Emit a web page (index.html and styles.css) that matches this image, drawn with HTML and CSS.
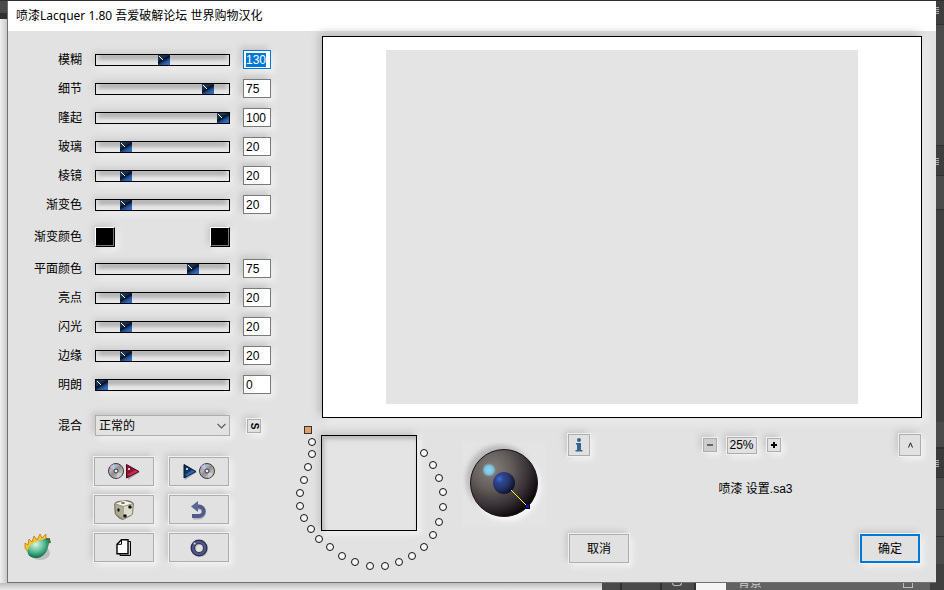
FILE: index.html
```
<!DOCTYPE html>
<html lang="zh-CN">
<head>
    <meta charset="UTF-8">
    <meta name="viewport" content="width=device-width, initial-scale=1.0">
    <title>喷漆Lacquer 1.80</title>
    <link rel="stylesheet" href="styles.css">
</head>
<body>

    <div class="desk-top"></div>
    <div class="desk-left"></div>

    <main class="dialog">
        <h1 class="title-bar">喷漆Lacquer 1.80 吾爱破解论坛 世界购物汉化</h1>

        <div class="dialog-body">
            <!-- Left side - sliders and buttons -->
            <section class="controls">
                <div class="rows" id="rowsTop"></div>

                <div class="row swatch-row">
                    <label for="colorA">渐变颜色</label>
                    <div class="swatches">
                        <input type="color" id="colorA" value="#000000">
                        <input type="color" id="colorB" value="#000000" aria-label="渐变颜色 2">
                    </div>
                </div>

                <div class="rows" id="rowsBottom"></div>

                <div class="row blend-row">
                    <label for="blend">混合</label>
                    <div class="select-box">
                        <select id="blend">
                            <option>正常的</option>
                        </select>
                        <svg class="chevron" width="9" height="6" viewBox="0 0 9 6"><path d="M0.5 0.8 4.5 4.8 8.5 0.8" fill="none" stroke="#555" stroke-width="1.2"/></svg>
                    </div>
                    <button class="tiny-button swap"><span>S</span></button>
                </div>

                <div class="actions">
                    <svg class="logo" width="30" height="30" viewBox="0 0 30 30">
                        <defs>
                            <radialGradient id="pear" cx="0.38" cy="0.3" r="0.75">
                                <stop offset="0" stop-color="#d9f7e6"/>
                                <stop offset="0.45" stop-color="#6cc4a0"/>
                                <stop offset="0.8" stop-color="#1d8a63"/>
                                <stop offset="1" stop-color="#07402c"/>
                            </radialGradient>
                        </defs>
                        <ellipse cx="16" cy="21" rx="10" ry="7" fill="#a5a5a5" opacity="0.6"/>
                        <path d="M4 20 1 16l0-5 3 2 1-6 3 3 2-6 3 4 3-6 2 4 4-4 0 8-10 9z" fill="#f7c32e" stroke="#b97812" stroke-width="0.8"/>
                        <path d="M4 17C6 12 12 9 17 8c4-1 6-2 7-1 2 2 1 5 0 8-1 6-6 11-12 11C6 26 2 22 4 17z" fill="url(#pear)"/>
                        <path d="M22 7l3 0 1 4" fill="none" stroke="#48732c" stroke-width="2"/>
                    </svg>

                    <button class="action" aria-label="打开设置">
                        <svg width="32" height="18" viewBox="0 0 32 18">
                            <defs>
                                <linearGradient id="disc" x1="0" y1="0" x2="1" y2="1">
                                    <stop offset="0" stop-color="#77717c"/>
                                    <stop offset="0.3" stop-color="#b9b5c2"/>
                                    <stop offset="0.5" stop-color="#8f8f8f"/>
                                    <stop offset="0.75" stop-color="#c5bcc9"/>
                                    <stop offset="1" stop-color="#777"/>
                                </linearGradient>
                                <g id="cd">
                                    <circle cx="8" cy="8" r="7.5" fill="url(#disc)" stroke="#3c3a35"/>
                                    <path d="M7 7 2 4a7 7 0 0 1 2-2z" fill="#e9a6e8"/>
                                    <path d="M7 7 4 2l2-1z" fill="#8de0ef"/>
                                    <path d="M9 9l5 2-2 3z" fill="#a7e8b0"/>
                                    <path d="M9 9l3 5-3 1z" fill="#ecb3ea"/>
                                    <circle cx="8" cy="8" r="2" fill="#eee" stroke="#333"/>
                                </g>
                            </defs>
                            <use href="#cd"/>
                            <path d="M20 3l12 6-12 8z" fill="#aaa"/>
                            <path d="M18.500 1.500l12.500 7-12.500 6.500z" fill="#8c1230" stroke="#4d0a1c"/>
                            <path d="M19 12l8-5 3 1.500-8 4z" fill="#c9304f"/>
                            <circle cx="21" cy="6" r="1" fill="#fff"/>
                        </svg>
                    </button>
                    <button class="action" aria-label="保存设置">
                        <svg width="33" height="18" viewBox="0 0 33 18">
                            <path d="M2 3l12 6-12 8z" fill="#aaa"/>
                            <path d="M1 1.500l12 7-12 6.500z" fill="#12315f" stroke="#0b1b38"/>
                            <path d="M2 12l7-5 3 1.500-8 4.500z" fill="#2a66b5"/>
                            <circle cx="4" cy="6" r="1" fill="#fff"/>
                            <use href="#cd" x="16"/>
                        </svg>
                    </button>
                    <button class="action" aria-label="随机">
                        <svg width="20" height="20" viewBox="0 0 20 20">
                            <path d="M0.500 4Q1 2 4 1.500L13 .5Q18 1 19.500 3.500L18.500 14Q18 15 16 16L9 19.500Q7 19 5 18L2 15Q1 14 1 12z" fill="#8f8d76" stroke="#55543f" stroke-width="0.6"/>
                            <path d="M1.500 3.500 10 .8l8.500 2.500L9.500 6z" fill="#f5f4e9"/>
                            <path d="M1.200 4.300 9.300 6.700l-.3 12L2.500 14z" fill="#aeac97"/>
                            <path d="M9.800 6.700l8.900-2.400-.7 10L9.500 18.700z" fill="#dcdaca"/>
                            <ellipse cx="9" cy="3" rx="2" ry="0.700" fill="#333"/>
                            <ellipse cx="4.500" cy="10" rx="1.200" ry="1.700" fill="#111"/>
                            <circle cx="16" cy="7" r="1.800" fill="#111"/>
                            <circle cx="11" cy="16" r="1.800" fill="#111"/>
                        </svg>
                    </button>
                    <button class="action" aria-label="撤销">
                        <svg width="18" height="20" viewBox="0 0 18 20">
                            <path d="M6 8h3a4.700 4.700 0 0 1 0 9.500H3" fill="none" stroke="#b5b5b5" stroke-width="4"/>
                            <path d="M6 6.500h3a4.700 4.700 0 0 1 0 9.500H2" fill="none" stroke="#525b8a" stroke-width="4"/>
                            <path d="M1 6.500 8 1v11z" fill="#5b6595"/>
                        </svg>
                    </button>
                    <button class="action" aria-label="复制">
                        <svg width="16" height="18" viewBox="0 0 16 18">
                            <path d="M4 2.500h10.500v14H4z" fill="#d5d2c4" stroke="#000"/>
                            <path d="M5.500.8H12v14H1V5.300z" fill="#fff" stroke="#000" stroke-width="1.400"/>
                            <path d="M5.500 1v4.300H1" fill="none" stroke="#000"/>
                        </svg>
                    </button>
                    <button class="action" aria-label="重置">
                        <svg width="18" height="18" viewBox="0 0 18 18">
                            <circle cx="10" cy="10" r="6" fill="none" stroke="#b5b5b5" stroke-width="4"/>
                            <circle cx="9" cy="9" r="6.200" fill="none" stroke="#272d4e" stroke-width="4.600"/>
                            <circle cx="9" cy="9" r="6" fill="none" stroke="#4f5883" stroke-width="2.500"/>
                            <circle cx="4.500" cy="4.500" r="1" fill="#dde"/>
                        </svg>
                    </button>
                </div>
            </section>

            <!-- Right side - preview and bottom panel -->
            <section class="stage">
                <div class="preview">
                    <div class="preview-image"></div>
                </div>

                <div class="panel">
                    <div class="memory" id="memory">
                        <div class="memory-box"></div>
                        <button class="memory-reset" aria-label="清除"></button>
                    </div>

                    <svg class="light" width="85" height="85" viewBox="0 0 85 85">
                        <defs>
                            <radialGradient id="ball" cx="0.32" cy="0.3" r="0.74">
                                <stop offset="0" stop-color="#858080"/>
                                <stop offset="0.4" stop-color="#635c5a"/>
                                <stop offset="0.75" stop-color="#352e33"/>
                                <stop offset="1" stop-color="#0d090b"/>
                            </radialGradient>
                            <radialGradient id="core" cx="0.3" cy="0.32" r="0.72">
                                <stop offset="0" stop-color="#3c6ce0"/>
                                <stop offset="0.25" stop-color="#2f468f"/>
                                <stop offset="0.6" stop-color="#26366c"/>
                                <stop offset="1" stop-color="#0d1330"/>
                            </radialGradient>
                            <radialGradient id="glow">
                                <stop offset="0" stop-color="#87d9f5"/>
                                <stop offset="0.6" stop-color="#7dc7e0"/>
                                <stop offset="1" stop-color="#7dc7e0" stop-opacity="0"/>
                            </radialGradient>
                            <filter id="soft" x="-20%" y="-20%" width="140%" height="140%"><feGaussianBlur stdDeviation="2.5"/></filter>
                        </defs>
                        <rect width="85" height="85" fill="#e4e4e4"/>
                        <circle cx="38" cy="37" r="34" fill="#b8b8b8" filter="url(#soft)"/>
                        <circle cx="45" cy="45" r="34" fill="#f8f8f8" filter="url(#soft)"/>
                        <circle cx="42" cy="41" r="33.500" fill="url(#ball)" stroke="#1a1517"/>
                        <circle cx="27" cy="28" r="7" fill="url(#glow)"/>
                        <circle cx="42" cy="41" r="11" fill="url(#core)"/>
                        <path d="M49 48 65 64" stroke="#ffff30" shape-rendering="crispEdges"/>
                        <rect x="63" y="63" width="5" height="4" fill="#000"/>
                        <rect x="64" y="63" width="3" height="3" fill="#0018e0"/>
                    </svg>

                    <div class="output">
                        <div class="toolbar">
                            <button class="square-button" aria-label="信息">
                                <svg width="8" height="14" viewBox="0 0 8 14">
                                    <circle cx="4" cy="2" r="2" fill="#34658f"/>
                                    <path d="M1 5h5v7h1.500v1.500h-7V12H2V6.500H1z" fill="#34658f"/>
                                </svg>
                            </button>
                            <div class="zoom">
                                <button class="tiny-button" disabled aria-label="缩小">
                                    <svg width="6" height="6" viewBox="0 0 6 6"><path d="M0 3h6" stroke="#666" stroke-width="2"/></svg>
                                </button>
                                <button class="zoom-value">25%</button>
                                <button class="tiny-button" aria-label="放大">
                                    <svg width="6" height="6" viewBox="0 0 6 6"><path d="M0 3h6M3 0v6" stroke="#000" stroke-width="2"/></svg>
                                </button>
                            </div>
                            <button class="square-button" aria-label="收起">
                                <svg width="5" height="6" viewBox="0 0 5 6"><path d="M.5 5.500 2.500.8l2 4.700" fill="none" stroke="#222"/></svg>
                            </button>
                        </div>
                        <p class="file-name">喷漆 设置.sa3</p>
                        <div class="footer">
                            <button class="action">取消</button>
                            <button class="action primary">确定</button>
                        </div>
                    </div>
                </div>
            </section>
        </div>
    </main>

    <div class="desk-right">
        <i class="grip"></i>
        <i class="grip"></i>
        <i class="grip"></i>
    </div>
    <div class="desk-bottom">
        <div class="layer-bar">
            <span class="layer-eye"></span>
            <span class="layer-thumb"></span>
            <span class="layer-name">背景</span>
            <span class="layer-lock"></span>
        </div>
    </div>

    <script src="script.js"></script>
</body>
</html>
```
FILE: styles.css
```
* {
    box-sizing: border-box;
    margin: 0;
    padding: 0;
}

body {
    display: grid;
    grid-template-columns: 7px 1fr 8px;
    grid-template-rows: 1px 1fr 7px;
    min-height: 100vh;
    background: #404040;
    color: #000;
    font-family: "Liberation Sans", "Noto Sans CJK SC", sans-serif;
    font-size: 12px;
    line-height: 16px;
    overflow: hidden;
}

button,
input,
select {
    font: inherit;
    color: inherit;
}

::selection {
    background: #0078d7;
    color: #fff;
}

/* What shows around the dialog */
.desk-top {
    grid-column: 1 / -1;
    background: #2f2f2f;
}

.desk-left {
    background: linear-gradient(#4a4a4a 12px, #303030 12px, #303030 18px, transparent 18px), linear-gradient(90deg, #efefef, #c9c9c9);
}

.desk-right {
    display: flex;
    flex-direction: column;
    background: linear-gradient(#3e3e3e 23px, #303030 23px 24px, #4b4b4b 24px 144px, #303030 144px 145px, #3e3e3e 145px 174px, #303030 174px 175px, #4b4b4b 175px 208px, #303030 208px 209px, #404040 209px 421px, #4b4b4b 421px 446px, #303030 446px 448px, #3a3a3a 448px 476px, #303030 476px 477px, #4b4b4b 477px 508px, #303030 508px 509px, #4b4b4b 509px 535px, #303030 535px 536px, #4b4b4b 536px 563px, #404040 563px);
}

.grip {
    width: 3px;
    height: 7px;
    margin-top: 6px;
    background: repeating-linear-gradient(#aaa 0 1px, #444 1px 2px);
}

.grip + .grip {
    margin-top: 144px;
}

.grip + .grip + .grip {
    margin-top: 295px;
}

.desk-bottom {
    grid-column: 1 / -1;
    display: flex;
    justify-content: flex-end;
    background: linear-gradient(#bdbdbd, #ebebeb);
    overflow: hidden;
}

.layer-bar {
    display: flex;
    width: 342px;
    background: linear-gradient(90deg, #4a4a4a 18px, #303030 18px 20px, #4a4a4a 20px 58px, #303030 58px 60px, #4a4a4a 60px 92px, #303030 92px 94px, #626262 94px 328px, #404040 328px);
    color: #ccc;
    line-height: 0;
}

.layer-eye {
    width: 10px;
    height: 3px;
    margin: 0 14px 0 70px;
    border: 1px solid #bbb;
    border-top: 0;
    border-radius: 0 0 5px 5px;
}

.layer-thumb {
    width: 30px;
    margin-right: 12px;
    background: #f4f4f4;
}

.layer-lock {
    width: 10px;
    height: 5px;
    margin-left: auto;
    margin-right: 31px;
    border: 1px solid #bbb;
    border-top: 0;
}

/* Dialog */
.dialog {
    display: flex;
    flex-direction: column;
    background: #e2e2e2;
    border: 1px solid #707070;
    border-top: 0;
    border-right: 0;
}

.title-bar {
    height: 30px;
    padding: 0 8px;
    background: #fff;
    font-family: "Noto Sans", "Noto Sans CJK SC", sans-serif;
    font-size: 12px;
    font-weight: normal;
    line-height: 30px;
}

.dialog-body {
    flex: 1;
    display: grid;
    grid-template-columns: 282px 1fr;
}

/* Left side - sliders and buttons */
.controls {
    display: flex;
    flex-direction: column;
    padding-top: 14px;
}

.row {
    display: grid;
    grid-template-columns: 75px 135px 28px;
    column-gap: 13px;
    align-items: center;
    height: 29px;
    margin-left: -1px;
}

.row label {
    text-align: right;
}

.swatch-row {
    height: 35px;
}

.blend-row {
    height: 53px;
}

input[type="range"] {
    appearance: none;
    width: 100%;
    height: 12px;
    border: 1px solid #000;
    background: linear-gradient(#a9a9a9, #c2c2c2 40%, #e4e4e4 70%, #e8e8e8);
    box-shadow: -2px -2px 6px #cacaca, 2px 3px 6px #f4f4f4, inset 4px 0 4px -2px #e4e4e4, inset -4px 0 4px -2px #e4e4e4;
}

input[type="range"]::-webkit-slider-thumb {
    appearance: none;
    width: 12px;
    height: 10px;
    background: linear-gradient(45deg, transparent 40%, #fff 40%, #fff 60%, transparent 60%) 1px 1px / 4px 4px no-repeat, linear-gradient(330deg, #2f68b8 20%, #1d4687 38%, #07101f 52%, #17304f 68%, #1c3a60);
}

input[type="text"] {
    width: 100%;
    height: 19px;
    padding: 0 2px;
    border: 1px solid #7a7a7a;
    background: #fff;
    outline: none;
    box-shadow: -3px -3px 6px #c6c6c6, 3px 3px 6px #f4f4f4;
}

input[type="text"]:focus {
    border-color: #0078d7;
}

.swatches {
    display: flex;
    justify-content: space-between;
}

input[type="color"] {
    appearance: none;
    width: 20px;
    height: 20px;
    border: 1px solid;
    border-color: #fff #000 #000 #fff;
    background: #000;
    box-shadow: -2px -2px 6px #c6c6c6, 3px 3px 6px #f4f4f4;
}

input[type="color"]::-webkit-color-swatch-wrapper {
    padding: 0;
}

input[type="color"]::-webkit-color-swatch {
    border: 1px solid;
    border-color: #000 #777 #777 #000;
    border-radius: 0;
}

.select-box {
    display: grid;
    align-items: center;
}

.select-box > * {
    grid-area: 1 / 1;
}

select {
    appearance: none;
    width: 100%;
    height: 21px;
    padding: 0 3px;
    border: 1px solid #adadad;
    border-radius: 0;
    background: #e2e2e2;
    box-shadow: -3px -3px 6px #c6c6c6, 3px 3px 6px #f4f4f4;
}

.chevron {
    justify-self: end;
    margin-right: 4px;
    pointer-events: none;
}

button {
    display: flex;
    align-items: center;
    justify-content: center;
    border: 1px solid #adadad;
    background: #e1e1e1;
    box-shadow: 0 0 0 1px #f0f0f0, -3px -3px 6px #c6c6c6, 3px 3px 6px #f6f6f6;
}

.tiny-button {
    width: 14px;
    height: 14px;
}

.tiny-button:disabled {
    background: #cdcdcd;
}

.swap {
    margin-left: 4px;
    font-size: 10px;
    font-weight: bold;
    line-height: 10px;
}

.swap span {
    transform: rotate(90deg);
}

.actions {
    display: grid;
    grid-template-columns: 71px 60px 60px;
    grid-auto-rows: 29px;
    gap: 9px 15px;
    padding-top: 5px;
}

.logo {
    grid-column: 1;
    grid-row: 1 / 4;
    align-self: end;
    margin-left: 16px;
}

.action {
    width: 60px;
    height: 29px;
}

.primary {
    border: 2px solid #0078d7;
}

/* Right side - preview and bottom panel */
.stage {
    display: flex;
    flex-direction: column;
    padding: 5px 14px 18px 0;
}

.preview {
    flex: 1;
    display: flex;
    margin-left: 32px;
    padding: 13px 63px;
    border: 1px solid #000;
    background: #fff;
    box-shadow: -3px -3px 8px #b8b8b8, 3px 3px 8px #f6f6f6;
}

.preview-image {
    flex: 1;
    background: #e4e4e4;
}

.panel {
    display: grid;
    grid-template-columns: 165px 85px 1fr;
    column-gap: 7px;
    height: 146px;
}

/* Memory dots sit freely around the box */
.memory {
    position: relative;
}

.memory-box {
    width: 96px;
    height: 96px;
    margin: 17px 0 0 31px;
    border: 1px solid #000;
    background: #e4e4e4;
    box-shadow: -3px -3px 6px #c6c6c6, 3px 3px 6px #f6f6f6, inset 2px 3px 4px #b5b5b5;
}

.memory-reset,
.memory-dot {
    position: absolute;
    width: 8px;
    height: 8px;
}

.memory-reset {
    left: 14px;
    top: 8px;
    border: 1px solid #333;
    background: #e0a06a;
    box-shadow: none;
}

.memory-dot {
    appearance: none;
    border: 1px solid #111;
    border-radius: 50%;
    background: #f6f6f6;
}

.light {
    margin-top: 24px;
}

.output {
    display: flex;
    flex-direction: column;
    justify-content: space-between;
    padding: 16px 1px 1px 14px;
}

.toolbar,
.footer,
.zoom {
    display: flex;
    align-items: center;
    justify-content: space-between;
}

.footer {
    padding: 0 1px;
}

.zoom {
    gap: 10px;
    padding-right: 6px;
}

.zoom-value {
    width: 30px;
    height: 17px;
}

.square-button {
    width: 22px;
    height: 22px;
}

.file-name {
    padding: 0 0 12px 22px;
    text-align: center;
}
```
FILE: script.js
```
const rowsTop = document.getElementById("rowsTop");
const rowsBottom = document.getElementById("rowsBottom");
const memory = document.getElementById("memory");

const topSliders = [
    ["模糊", 130, 252],
    ["细节", 75, 86],
    ["隆起", 100, 100],
    ["玻璃", 20, 100],
    ["棱镜", 20, 100],
    ["渐变色", 20, 100]
];

const bottomSliders = [
    ["平面颜色", 75, 100],
    ["亮点", 20, 100],
    ["闪光", 20, 100],
    ["边缘", 20, 100],
    ["明朗", 0, 100]
];

const dots = [
    [22, 24], [22, 36], [18, 49], [14, 62], [10, 75], [10, 88],
    [14, 100], [21, 111], [29, 121], [40, 129], [52, 138], [65, 144],
    [80, 148], [95, 148], [109, 144], [122, 138], [134, 129], [143, 117],
    [149, 104], [153, 89], [153, 74], [149, 60], [143, 47], [134, 35]
];

function addSlider(parent, name, value, max) {
    const row = document.createElement("div");
    row.className = "row";
    row.innerHTML = `
        <label for="${name}">${name}</label>
        <input type="range" id="${name}" min="0" max="${max}" value="${value}">
        <input type="text" aria-label="${name}" value="${value}">`;

    const range = row.children[1];
    const box = row.children[2];
    range.addEventListener("input", () => box.value = range.value);
    box.addEventListener("input", () => range.value = box.value);
    parent.append(row);
}

topSliders.forEach(s => addSlider(rowsTop, ...s));
bottomSliders.forEach(s => addSlider(rowsBottom, ...s));

dots.forEach(([x, y], i) => {
    const dot = document.createElement("input");
    dot.type = "radio";
    dot.name = "memory";
    dot.className = "memory-dot";
    dot.setAttribute("aria-label", "记忆 " + (i + 1));
    dot.style.left = (x - 4) + "px";
    dot.style.top = (y - 4) + "px";
    memory.append(dot);
});

const firstBox = rowsTop.querySelector("input[type=text]");
firstBox.focus();
firstBox.select();
```
